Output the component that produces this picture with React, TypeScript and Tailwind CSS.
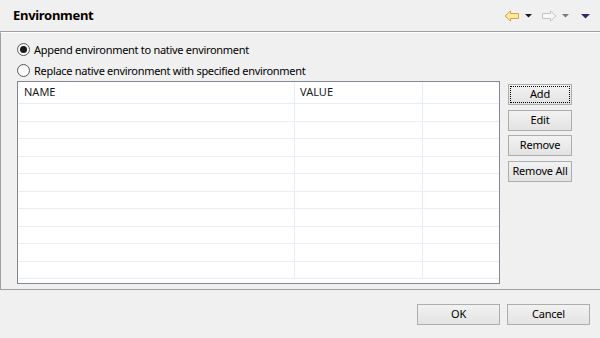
import React from "react";

const font = { fontFamily: '"Noto Sans", "Open Sans", sans-serif' };

function Btn({ label, focus, w }: { label: string; focus?: boolean; w: string }) {
  return (
    <div
      className={`${w} h-[21px] flex items-center justify-center whitespace-nowrap border border-[#adadad] bg-gradient-to-b from-[#f2f2f2] to-[#e3e3e3] text-[11px] tracking-[-0.2px] text-black ${
        focus ? "border-[#3c7fb1] outline outline-1 outline-dotted outline-black -outline-offset-[3px]" : ""
      }`}
    >
      {label}
    </div>
  );
}

function Radio({ checked, label }: { checked?: boolean; label: string }) {
  return (
    <div className="flex items-center gap-[4px] h-[21px]">
      <div className="w-[13px] h-[13px] rounded-full border border-[#5a5a5a] bg-gradient-to-b from-[#f4f4f4] to-white flex items-center justify-center">
        {checked && <div className="w-[7px] h-[7px] rounded-full bg-[#1a1a1a]" />}
      </div>
      <span className="text-[11px] tracking-[-0.3px] text-black leading-none whitespace-nowrap">{label}</span>
    </div>
  );
}

export default function App() {
  const rows = Array.from({ length: 10 });
  return (
    <div className="w-[600px] h-[338px] bg-[#f0f0f0] flex flex-col overflow-hidden" style={font}>
      {/* Header */}
      <div className="h-[32px] shrink-0 flex items-center justify-between pl-[13px] pr-[10px] border-b border-[#a0a0a0]">
        <span className="text-[13px] font-bold tracking-[-0.3px] text-black">Environment</span>
        <div className="flex items-center">
          <svg width="16" height="12" viewBox="0 0 16 12" className="mr-[5px]">
            <path d="M1 6 L6.5 1 L6.5 3.5 L14.5 3.5 L14.5 8.5 L6.5 8.5 L6.5 11 Z" fill="#fde7a4" stroke="#d9a43a" strokeWidth="1" strokeLinejoin="round" />
          </svg>
          <svg width="7" height="5" viewBox="0 0 7 5" className="mr-[9px]">
            <path d="M0 1 L7 1 L3.5 4.5 Z" fill="#1a1a1a" />
          </svg>
          <svg width="16" height="12" viewBox="0 0 16 12" className="mr-[5px]">
            <path d="M15 6 L9.5 1 L9.5 3.5 L1.5 3.5 L1.5 8.5 L9.5 8.5 L9.5 11 Z" fill="#f7f7f7" stroke="#c4c4c4" strokeWidth="1" strokeLinejoin="round" />
          </svg>
          <svg width="7" height="5" viewBox="0 0 7 5" className="mr-[12px]">
            <path d="M0 1 L7 1 L3.5 4.5 Z" fill="#7a7a7a" />
          </svg>
          <svg width="9" height="6" viewBox="0 0 9 6">
            <path d="M0 1 L9 1 L4.5 5.5 Z" fill="#3a2360" />
          </svg>
        </div>
      </div>
      {/* Body */}
      <div className="h-[258px] shrink-0 border-l border-b border-[#a0a0a0] border-t border-t-white flex flex-col pl-[16px] pr-[27px]">
        <div className="pt-[6px] flex flex-col">
          <Radio checked label="Append environment to native environment" />
          <Radio label="Replace native environment with specified environment" />
        </div>
        <div className="flex gap-[8px]">
          <div className="w-[483px] h-[203px] border border-[#828790] bg-white flex flex-col overflow-hidden">
            <div className="h-[22px] shrink-0 flex border-b border-[#e5eef8] text-[11px] text-[#1a1a1a]">
              <div className="w-[277px] pl-[6px] flex items-center border-r border-[#e5eef8]">NAME</div>
              <div className="w-[128px] pl-[5px] flex items-center border-r border-[#e5eef8]">VALUE</div>
              <div className="flex-1" />
            </div>
            {rows.map((_, i) => (
              <div key={i} className="h-[17.5px] shrink-0 flex border-b border-[#eaeef3]">
                <div className="w-[277px] border-r border-[#e5eef8]" />
                <div className="w-[128px] border-r border-[#e5eef8]" />
                <div className="flex-1" />
              </div>
            ))}
          </div>
          <div className="flex flex-col gap-[4.5px] pt-[3px]">
            <Btn label="Add" focus w="w-[64px]" />
            <Btn label="Edit" w="w-[64px]" />
            <Btn label="Remove" w="w-[64px]" />
            <Btn label="Remove All" w="w-[64px]" />
          </div>
        </div>
      </div>
      {/* Footer */}
      <div className="flex justify-end gap-[7px] pr-[10px] pt-[14px]">
        <Btn label="OK" w="w-[83px]" />
        <Btn label="Cancel" w="w-[83px]" />
      </div>
    </div>
  );
}
